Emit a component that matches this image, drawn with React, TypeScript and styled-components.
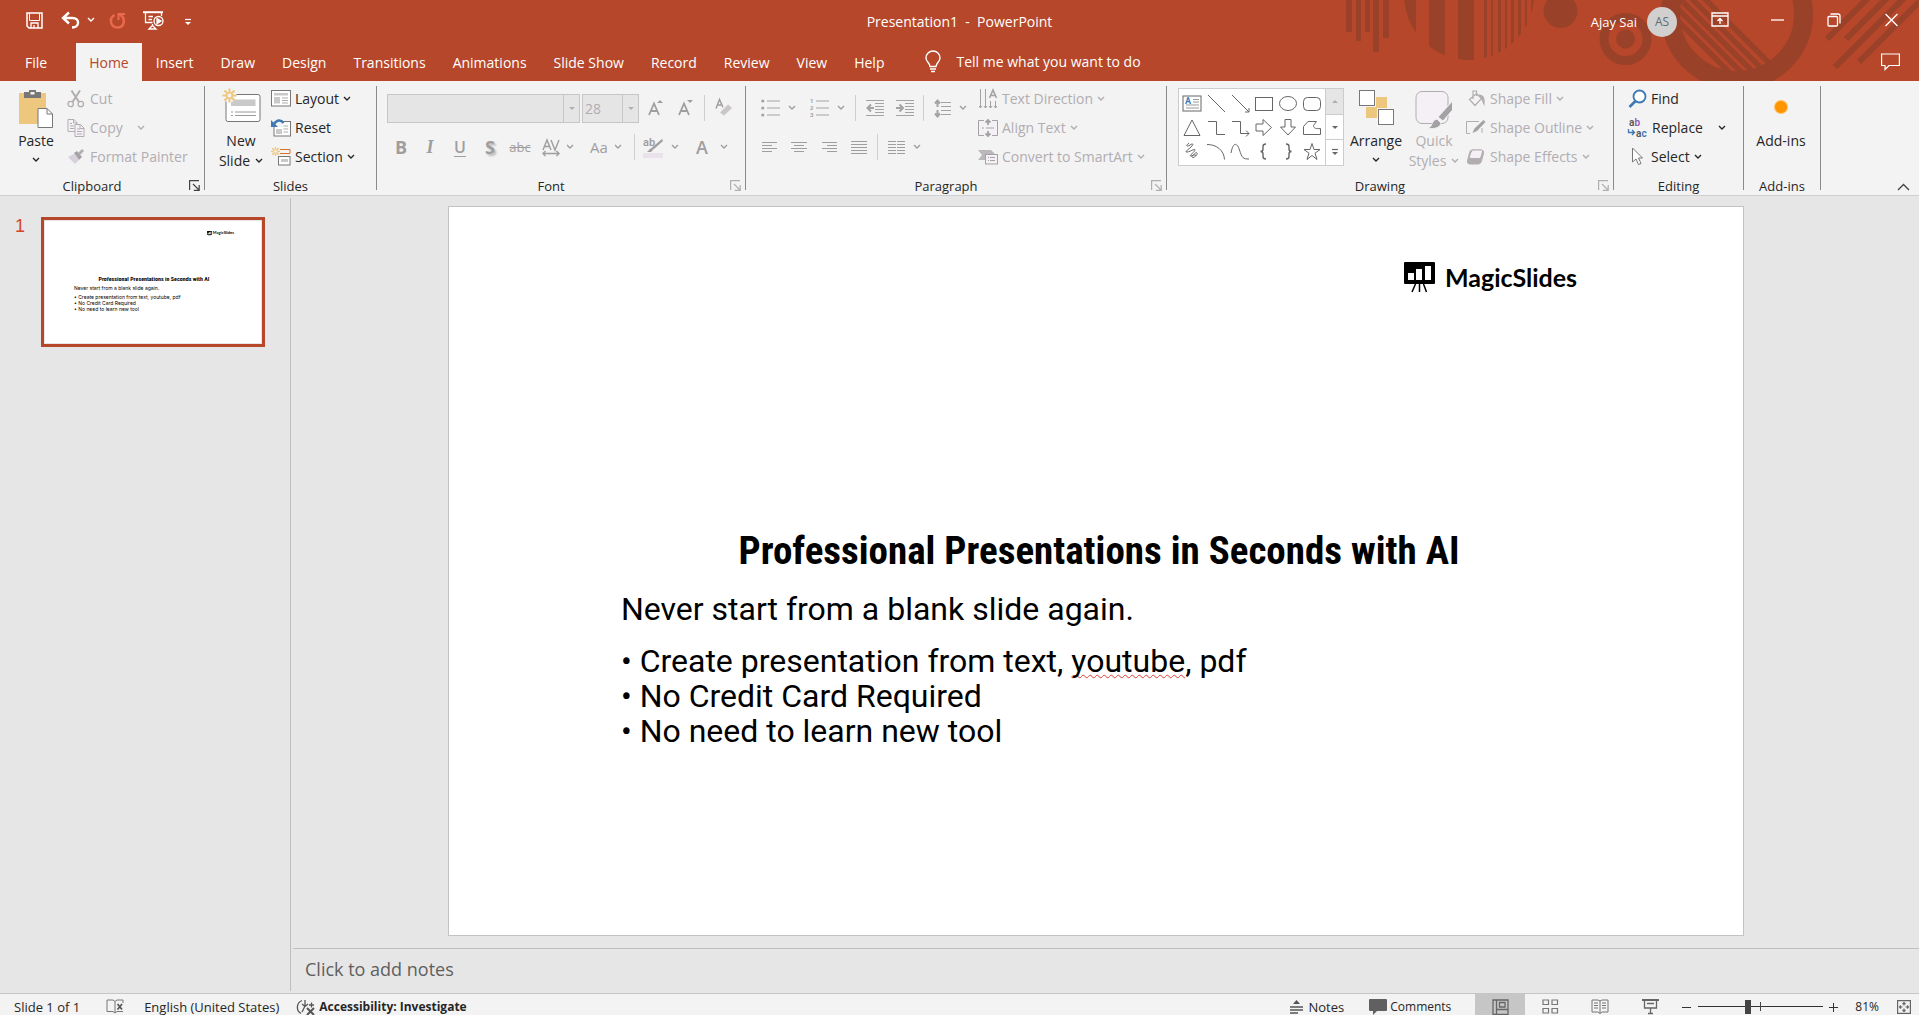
import React from "react";
import styled, { createGlobalStyle, css } from "styled-components";

const GlobalStyle = createGlobalStyle`
  *, *::before, *::after { box-sizing: border-box; }
  body { margin: 0; background: #e6e6e6; }
  button, input, textarea { font: inherit; color: inherit; }
`;

const ACCENT = "#b7472a";
const SHADE = "#9a4129";
const INK = "#262626";
const MUTED = "#b1adb1";
const GOLD = "#eec77f";
const BLUE = "#3f78b5";

/* ---------- shell ---------- */

const Shell = styled.div`
  display: flex;
  flex-direction: column;
  height: 100vh;
  overflow: hidden;
  font-family: "Open Sans", "Noto Sans", sans-serif;
  font-size: 14px;
  color: ${INK};
  background: #e6e6e6;
`;

const Top = styled.header`
  position: relative;
  flex: none;
  color: #fff;
  background: ${ACCENT};
`;

const Pattern = styled.svg`
  position: absolute;
  top: 0;
  right: 0;
`;

const TitleRow = styled.div`
  position: relative;
  display: grid;
  grid-template-columns: 1fr auto 1fr;
  align-items: center;
  height: 43px;
`;

const QuickAccess = styled.div`
  display: flex;
  align-items: center;
  padding-left: 26px;
  padding-bottom: 3px;
`;

const BareButton = styled.button<{ $ml?: number; $pt?: number }>`
  display: flex;
  align-items: center;
  justify-content: center;
  padding: ${(p) => p.$pt ?? 0}px 0 0;
  margin: 0 0 0 ${(p) => p.$ml ?? 0}px;
  border: 0;
  background: none;
`;

const WindowTitle = styled.h1`
  margin: 0;
  font-size: 14px;
  font-weight: 400;
  white-space: pre;
`;

const WindowTools = styled.div`
  display: flex;
  justify-content: flex-end;
  align-items: center;
  padding-right: 20px;
`;

const UserName = styled.span`
  font-size: 13px;
`;

const Avatar = styled.span`
  display: grid;
  place-items: center;
  width: 30px;
  height: 30px;
  margin-left: 10px;
  border-radius: 50%;
  font-size: 12px;
  color: #5d6a78;
  background: #d2d0ce;
`;

const WindowButtons = styled.div`
  display: flex;
  align-items: center;
  margin-left: 34px;
  padding-bottom: 4px;
`;

const TabRow = styled.nav`
  position: relative;
  display: flex;
  align-items: stretch;
  gap: 1px;
  height: 38px;
  padding: 0 19px 0 12px;
`;

const Tab = styled.button<{ $active?: boolean; $file?: boolean }>`
  padding: 0 13px;
  margin-right: ${(p) => (p.$file ? 15 : 0)}px;
  border: 0;
  color: ${(p) => (p.$active ? ACCENT : "#fff")};
  background: ${(p) => (p.$active ? "#f3f3f3" : "transparent")};
`;

const TellMe = styled.label`
  display: flex;
  align-items: center;
  flex: 1;
  gap: 15px;
  margin-left: 27px;
`;

const TellInput = styled.input`
  width: 260px;
  padding: 0 0 2px;
  border: 0;
  outline: 0;
  background: none;
  &::placeholder { color: #fff; opacity: 1; }
`;

/* ---------- ribbon ---------- */

const Ribbon = styled.section`
  display: flex;
  flex: none;
  height: 115px;
  padding-top: 4px;
  border-bottom: 1px solid #d0d0d0;
  background: #f3f3f3;
`;

const GroupBox = styled.section<{ $w: number }>`
  display: flex;
  flex-direction: column;
  flex: none;
  width: ${(p) => p.$w}px;
`;

const Divider = styled.div`
  flex: none;
  width: 1px;
  height: 104px;
  margin-top: 1px;
  background: #8a8a8a;
`;

const GroupBody = styled.div<{ $pl?: number }>`
  display: flex;
  height: 91px;
  padding-left: ${(p) => p.$pl ?? 0}px;
`;

const GroupFoot = styled.footer`
  display: flex;
  align-items: center;
  height: 19px;
  font-size: 13px;
`;

const GroupLabel = styled.span`
  flex: 1;
  text-align: center;
`;

const Launcher = styled.button`
  display: flex;
  width: 20px;
  padding: 0 0 1px 5px;
  border: 0;
  background: none;
`;

const SmallStack = styled.div<{ $ml?: number }>`
  display: flex;
  flex-direction: column;
  align-items: flex-start;
  margin-left: ${(p) => p.$ml ?? 0}px;
`;

const SmallButton = styled.button<{ $gap?: number }>`
  display: flex;
  align-items: center;
  gap: ${(p) => p.$gap ?? 4}px;
  height: 29px;
  padding: 0 0 2px;
  border: 0;
  white-space: nowrap;
  background: none;
  &:disabled { color: ${MUTED}; }
`;

const LargeButton = styled.button<{ $w: number }>`
  display: flex;
  flex-direction: column;
  align-items: center;
  justify-content: flex-start;
  gap: 3px;
  width: ${(p) => p.$w}px;
  padding: 3px 0 0;
  border: 0;
  line-height: 20px;
  background: none;
  &:disabled { color: ${MUTED}; }
`;

const LargeIcon = styled.span`
  display: flex;
  align-items: flex-start;
  height: 40px;
`;

const LargeText = styled.span`
  display: flex;
  flex-direction: column;
  align-items: center;
`;

const Inline = styled.span<{ $ml?: number }>`
  display: flex;
  align-items: center;
  justify-content: center;
  gap: 5px;
  min-height: 18px;
  margin-left: ${(p) => p.$ml ?? 0}px;
`;

const ToolColumn = styled.div<{ $w?: number }>`
  display: flex;
  flex-direction: column;
  gap: 11px;
  padding-top: 8px;
  width: ${(p) => (p.$w ? p.$w + "px" : "auto")};
`;

const ToolRow = styled.div<{ $h: number }>`
  display: flex;
  align-items: center;
  height: ${(p) => p.$h}px;
`;

const Tool = styled.button<{ $w?: number; $gap?: number }>`
  display: flex;
  align-items: center;
  justify-content: center;
  gap: ${(p) => p.$gap ?? 8}px;
  flex: none;
  width: ${(p) => p.$w ?? 30}px;
  height: 26px;
  padding: 0;
  border: 0;
  color: #a09da0;
  background: none;
`;

const Rule = styled.span`
  flex: none;
  width: 1px;
  height: 26px;
  margin: 0 4px 0 3px;
  background: #cfcfcf;
`;

const Glyph = styled.span<{ $kind?: "bold" | "italic" | "under" | "shadow" | "strike" | "case" }>`
  font-size: 18px;
  line-height: 20px;
  font-weight: 600;
  ${(p) => p.$kind === "bold" && css`font-weight: 700;`}
  ${(p) => p.$kind === "italic" && css`font-family: "Liberation Serif", serif; font-style: italic; font-weight: 700;`}
  ${(p) => p.$kind === "under" && css`font-size: 16px; text-decoration: underline; text-underline-offset: 3px;`}
  ${(p) => p.$kind === "shadow" && css`font-weight: 700; text-shadow: 2px 2px 2px #bbb;`}
  ${(p) => p.$kind === "strike" && css`font-size: 13px; font-weight: 400; text-decoration: line-through;`}
  ${(p) => p.$kind === "case" && css`font-size: 15px; font-weight: 400;`}
`;

const Combo = styled.label<{ $w: number }>`
  display: flex;
  width: ${(p) => p.$w}px;
  height: 29px;
  margin-right: 2px;
  border: 1px solid #c6c6c6;
  color: ${MUTED};
  background: #e5e5e5;
`;

const ComboInput = styled.input`
  flex: 1;
  min-width: 0;
  padding: 0 2px;
  border: 0;
  outline: 0;
  background: none;
`;

const ComboArrow = styled.span`
  display: grid;
  place-items: center;
  width: 16px;
  border-left: 1px solid #c6c6c6;
`;

const Gallery = styled.div`
  display: flex;
  height: 78px;
  margin: 3px 4px 0 0;
  border: 1px solid #cccccc;
  background: #fff;
`;

const ShapeGrid = styled.div`
  display: grid;
  grid-template-columns: repeat(6, 24px);
  grid-auto-rows: 24px;
  padding: 2px 1px 0 1px;
`;

const ShapeButton = styled(BareButton)`
  width: 24px;
  height: 24px;
`;

const GalleryScroll = styled.div`
  display: flex;
  flex-direction: column;
  width: 18px;
  border-left: 1px solid #cccccc;
`;

const ScrollButton = styled.button`
  display: grid;
  place-items: center;
  flex: 1;
  padding: 0;
  border: 0;
  background: #fff;
  &:disabled { background: #e5e5e5; }
  & + & { border-top: 1px solid #cccccc; }
`;

const Collapse = styled(BareButton)`
  align-self: flex-end;
  margin: 0 9px 4px auto;
`;

/* ---------- workspace ---------- */

const Workspace = styled.main`
  display: flex;
  flex: 1;
  min-height: 0;
`;

const ThumbPane = styled.aside`
  display: flex;
  align-items: flex-start;
  flex: none;
  width: 291px;
  margin: 2px 2px 2px 0;
  padding: 19px 0 0 15px;
  border-right: 1px solid #bfbfbf;
`;

const ThumbNumber = styled.span`
  width: 26px;
  font-family: "Liberation Sans", sans-serif;
  font-size: 18px;
  line-height: 18px;
  color: #d24726;
`;

const ThumbFrame = styled.button`
  width: 224px;
  height: 130px;
  padding: 1px;
  border: 3px solid ${ACCENT};
  text-align: left;
  background: #e6e6e6;
`;

const Stage = styled.div`
  display: flex;
  flex-direction: column;
  flex: 1;
  min-width: 0;
`;

const Canvas = styled.div`
  display: flex;
  justify-content: center;
  flex: 1;
  min-height: 0;
  padding: 11px 20px 13px 0;
`;

const SlideFrame = styled.div`
  height: 100%;
  aspect-ratio: 16 / 9;
  background: #fff;
  box-shadow: 0 0 0 1px #c3c3c3;
`;

const Page = styled.article<{ $mini?: boolean }>`
  display: flex;
  flex-direction: column;
  height: 100%;
  padding: ${(p) => (p.$mini ? "9px 27px 0 29px" : "55px 166px 0 172px")};
  font-family: ${(p) => (p.$mini ? "Inter" : "Roboto")}, sans-serif;
  font-size: ${(p) => (p.$mini ? 5 : 32)}px;
  line-height: ${(p) => (p.$mini ? 6 : 35)}px;
  color: #000;
  background: #fff;
`;

const Brand = styled.div<{ $mini?: boolean }>`
  display: flex;
  align-items: center;
  align-self: flex-end;
  gap: ${(p) => (p.$mini ? 1 : 10)}px;
  height: ${(p) => (p.$mini ? 6 : 30)}px;
  font-family: Lato, sans-serif;
  font-size: ${(p) => (p.$mini ? 4 : 25)}px;
  font-weight: 700;
`;

const Headline = styled.h2<{ $mini?: boolean }>`
  align-self: center;
  margin: ${(p) => (p.$mini ? "39px 0 0" : "230px 0 0")};
  font-family: "Roboto Condensed", "Liberation Sans Narrow", "DejaVu Sans Condensed", sans-serif;
  font-size: ${(p) => (p.$mini ? 6 : 39)}px;
  line-height: ${(p) => (p.$mini ? 8 : 58)}px;
  font-weight: 700;
  white-space: nowrap;
`;

const Lead = styled.p<{ $mini?: boolean }>`
  margin: ${(p) => (p.$mini ? "2px 0 3px" : "12px 0 17px")};
  white-space: nowrap;
`;

const Points = styled.ul`
  margin: 0;
  padding: 0;
  list-style: none;
  white-space: nowrap;
`;

const Misspelt = styled.span`
  text-decoration: underline wavy #e03c31 1px;
  text-underline-offset: 2px;
  text-decoration-skip-ink: none;
`;

const Notes = styled.textarea`
  flex: none;
  height: 45px;
  padding: 8px 12px;
  border: 0;
  border-top: 1px solid #bfbfbf;
  outline: 0;
  resize: none;
  font-size: 18px;
  line-height: 24px;
  background: transparent;
  &::placeholder { color: #5f5f5f; opacity: 1; }
`;

/* ---------- status bar ---------- */

const Status = styled.footer`
  display: flex;
  flex: none;
  height: 22px;
  padding: 0 8px 0 14px;
  border-top: 1px solid #c6c6c6;
  font-size: 12px;
  background: #f3f3f3;
`;

const StatusItem = styled.button<{ $ml?: number; $w?: number; $on?: boolean; $strong?: boolean; $gap?: number; $big?: boolean }>`
  display: flex;
  align-items: center;
  justify-content: center;
  gap: ${(p) => p.$gap ?? 5}px;
  width: ${(p) => (p.$w ? p.$w + "px" : "auto")};
  margin-left: ${(p) => p.$ml ?? 0}px;
  padding: 4px 0 0;
  border: 0;
  font-size: ${(p) => (p.$big ? 13 : 12)}px;
  line-height: 16px;
  font-weight: ${(p) => (p.$strong ? 700 : 400)};
  white-space: nowrap;
  background: ${(p) => (p.$on ? "#c6c6c6" : "transparent")};
`;

const Spring = styled.span`
  flex: 1;
`;

const ZoomSlider = styled.input`
  appearance: none;
  width: 125px;
  height: 17px;
  margin: 4px 6px 0;
  background:
    linear-gradient(#444, #444) 62px 4px / 1px 9px no-repeat,
    linear-gradient(#333, #333) 0 8px / 100% 1px no-repeat;
  &::-webkit-slider-thumb {
    appearance: none;
    width: 6px;
    height: 14px;
    background: #444;
  }
`;

/* ---------- icons ---------- */

type IconProps = { w: number; h: number; children: React.ReactNode; c?: string; sw?: number; vb?: string };

const Svg = styled.svg`
  flex: none;
  overflow: visible;
  font-family: Roboto, sans-serif;
`;

const Icon = ({ w, h, children, c = "currentColor", sw = 1, vb }: IconProps) => (
  <Svg width={w} height={h} viewBox={vb ?? `0 0 ${w} ${h}`} fill="none" stroke={c} strokeWidth={sw} aria-hidden="true">
    {children}
  </Svg>
);

const Chevron = ({ c = "currentColor" }: { c?: string }) => (
  <Icon w={8} h={6} c={c} sw={1.4}><path d="M1 1l3 3 3-3" /></Icon>
);

const Caret = ({ c = MUTED, up, bar }: { c?: string; up?: boolean; bar?: boolean }) => (
  <Icon w={8} h={8} c="none">
    {bar && <path d="M1 .5h6" stroke={c} strokeWidth="1.2" />}
    <path d={up ? "M1 6l3-3 3 3z" : "M1 3h6L4 6z"} fill={c} />
  </Icon>
);

const LauncherIcon = ({ c }: { c: string }) => (
  <Icon w={11} h={11} c={c} sw={1.2}><path d="M.6 10V.6H10M4 4l5.5 5.5M10.2 5v5.4H4.8" /></Icon>
);

const SaveIcon = () => (
  <Icon w={17} h={17} c="#fff" sw={1.5}><path d="M1 1h15v15H3L1 14z" /><path d="M3.500 1v7.500h10V1" strokeWidth="1" /><path d="M5 16v-5h7v5M8 16v-3" strokeWidth="1.3" /></Icon>
);
const UndoIcon = () => (
  <Icon w={19} h={17} c="#fff" sw={2.4}><path d="M8 .5L2 6l6 5.500M3 6h8.500c7.500 0 7.500 9.500-.500 9.500" /></Icon>
);
const RedoIcon = () => (
  <Icon w={17} h={17} c="#e9694c" sw={2.6}><path d="M5.500 3C-1 7 2 15.500 8.500 15.500S17.500 7 11 2.500" /><path d="M9.500 8V2H16" strokeWidth="2" /></Icon>
);
const ShowIcon = () => (
  <Icon w={21} h={19} c="#fff" sw={1.3}>
    <path d="M0 1.200h20" strokeWidth="2" /><path d="M2.500 2v9.500h7M18.500 2v3M5.500 5.500H10M5.500 8.500H9M9.500 13v1.500M6 18l3.500-3.500 3.500 3.500z" />
    <circle cx="15.500" cy="10" r="4.500" /><path d="M14 7.500l4 2.500-4 2.500z" fill="#fff" />
  </Icon>
);
const BulbIcon = () => (
  <Icon w={16} h={22} c="#fff" sw={1.4}><path d="M5 15.500c0-3.500-4-4.500-4-8.500a7 7 0 0114 0c0 4-4 5-4 8.500zM5 18h6M6 20.500h4" /></Icon>
);
const CommentOutline = () => (
  <Icon w={19} h={18} c="#fff" sw={1.2}><path d="M.6 1h17.800v11.500H8l-4 4v-4H.6z" /></Icon>
);

const PasteIcon = () => (
  <Icon w={36} h={40} c="none">
    <rect x="1" y="5" width="27" height="31" fill={GOLD} />
    <path d="M6 4h5V2h7v2h5v6H6z" fill="#777" /><path d="M12.500 4h4v2.500h-4z" fill="#f3f3f3" />
    <path d="M20 20.500h9l5.500 5.500v13.500H20z" fill="#fff" stroke="#777" /><path d="M29 20.500V26h5.500" stroke="#777" />
  </Icon>
);
const CutIcon = () => (
  <Icon w={18} h={18} c={MUTED} sw={1.3}>
    <path d="M4.500 .5l7.500 11.500M13 .5L5.500 12" strokeWidth="2" /><circle cx="3.700" cy="14" r="2.700" /><circle cx="13.800" cy="14" r="2.700" />
  </Icon>
);
const CopyIcon = () => (
  <Icon w={18} h={18} c={MUTED}>
    <path d="M8 12.500H1V.5h6l3 3v2M6.500.5v3.500H10M3 4.500h2M3 7h4M3 9.500h4" /><path d="M8 5.500h5.500l3.500 3.500v8.500H8zM13 5.500V9.500h4M10 10h3M10 12.500h5M10 15h5" fill="#f5f0f6" />
  </Icon>
);
const PainterIcon = () => (
  <Icon w={18} h={18} c="none">
    <path d="M1 9l6-3 5 6-4 4z" fill="#d8d0da" /><path d="M7 5l3-2 5 6-3 3z" fill="#a5a2a5" /><path d="M11 5l4-4 2 2-4 4z" fill={MUTED} />
  </Icon>
);
const Burst = ({ x, y, r }: { x: number; y: number; r: number }) => (
  <g stroke={GOLD} strokeWidth={r > 5 ? 2 : 1.4}>
    {[0, 45, 90, 135, 180, 225, 270, 315].map((a) => (
      <path key={a} d={`M${x} ${y - r * 0.45}V${y - r}`} transform={`rotate(${a} ${x} ${y})`} />
    ))}
    <circle cx={x} cy={y} r={r * 0.4} fill="#f3f3f3" strokeWidth={r > 5 ? 1.6 : 1} />
  </g>
);
const NewSlideIcon = () => (
  <Icon w={40} h={40} c="#777">
    <rect x="5" y="6.500" width="34" height="27" rx="2" fill="#fff" /><path d="M10 11.500h24.500v6.500H10z" fill="#c9c9c9" stroke="none" />
    <path d="M10 24h2M14 24h21M10 27.500h2M14 27.500h21" stroke="#999" /><circle cx="8.500" cy="7.500" r="7" fill="#f3f3f3" stroke="none" /><Burst x={8.5} y={7.5} r={7} />
  </Icon>
);
const LayoutIcon = () => (
  <Icon w={20} h={17} c="#777"><rect x=".5" y=".5" width="19" height="15.500" fill="#fff" /><path d="M3 3h14v2.500H3zM3 7h6v6.500H3z" fill="#c9c9c9" stroke="none" /><path d="M11 8h6M11 10.500h6M11 13h6" stroke="#aaa" /></Icon>
);
const ResetIcon = () => (
  <Icon w={20} h={18} c="#777"><rect x="3" y="2.500" width="16.500" height="14.500" fill="#fff" /><path d="M5 10h6v5H5z" fill="#c9c9c9" stroke="none" /><path d="M12.500 7H17M12.500 10H17M12.500 13H17" stroke="#aaa" /><path d="M0 0h12v8H0z" fill="#f3f3f3" stroke="none" /><path d="M3 5C6 .5 10 .5 12.500 4" stroke={BLUE} strokeWidth="2.400" /><path d="M0 1v7h7z" fill={BLUE} stroke="none" /></Icon>
);
const SectionIcon = () => (
  <Icon w={20} h={19} c="#777"><path d="M9 2.500h10v4H9" stroke="#d9702c" /><rect x="7.500" y="9.500" width="11.500" height="8.500" fill="#fff" /><path d="M10 12h7v3h-7z" fill="#c9c9c9" stroke="none" /><Burst x={4.5} y={4.5} r={4.5} /></Icon>
);
const GrowIcon = ({ down }: { down?: boolean }) => (
  <Icon w={16} h={20} c="#a09da0" sw={1.8}><path d="M1 17L6 5.500 11 17M3 13h6" /><path d={down ? "M9 2h6l-3 3z" : "M9 5h6l-3-3z"} fill="#a09da0" stroke="none" /></Icon>
);
const EraseIcon = () => (
  <Icon w={18} h={20} c="#a09da0" sw={1.5}><path d="M1 10.500l3.500-9L8 9.500M2.500 7h5" /><path d="M4 14.500L13 5.500l5 4.500-9 8.500z" fill="#c9c5c9" stroke="#f3f3f3" /></Icon>
);
const SpacingIcon = () => (
  <Icon w={18} h={19} c="#a09da0" sw={1.4}><path d="M1 12L5 2l4 10M2.500 8.500h5M9 2l4 10L17 2M1 15.500h16M3.500 13L1 15.500 3.500 18M14.500 13l2.500 2.500-2.500 2.500" /></Icon>
);
const HighlightIcon = () => (
  <Icon w={20} h={21} c="none"><path d="M0 16h20v5H0z" fill="#e9e2ea" /><path d="M19 2l-10 8.500-1.500 3 3.500-1.500L20 4z" fill="#a09da0" /><path d="M4 15l4-4 2 2-2 2z" fill="#a09da0" />
    <text x="0" y="9" fontSize="11" fontWeight="600" fill="#a09da0">ab</text></Icon>
);
const ListIcon = ({ num }: { num?: boolean }) => (
  <Icon w={19} h={18} c="#a5a2a5"><path d="M6 2h13M6 9h13M6 16h13" />
    {num ? <g fill="#a5a2a5" stroke="none" fontSize="6" fontWeight="700"><text x="0" y="4">1</text><text x="0" y="11">2</text><text x="0" y="18">3</text></g>
      : <g fill="#a5a2a5" stroke="none"><circle cx="1.800" cy="2" r="1.600" /><circle cx="1.800" cy="9" r="1.600" /><circle cx="1.800" cy="16" r="1.600" /></g>}
  </Icon>
);
const IndentIcon = ({ out }: { out?: boolean }) => (
  <Icon w={19} h={17} c="#a5a2a5"><path d="M0 .5h18M9 3.500h9M9 6.500h9M9 9.500h9M9 12.500h9M0 15.500h18" /><path d={out ? "M8 8H2M5 4.500L1.500 8 5 11.500" : "M0 8h6M3.500 4.500L7 8l-3.500 3.500"} strokeWidth="2" /></Icon>
);
const LineSpaceIcon = () => (
  <Icon w={18} h={19} c="#a5a2a5"><path d="M7 3.500h10M7 7.500h10M7 11.500h10M7 15.500h10" /><path d="M3.500 1.500V8M1 4.500l2.500-3 2.500 3M3.500 11v6M1 14.500l2.500 3 2.500-3" strokeWidth="2" /></Icon>
);
const AlignIcon = ({ kind }: { kind: "l" | "c" | "r" | "j" | "cols" }) => {
  const d = {
    l: "M0 1.500h15M0 4.500h10M0 7.500h15M0 10.500h10",
    c: "M0 1.500h16M3 4.500h10M0 7.500h16M3 10.500h10",
    r: "M0 1.500h15M5 4.500h10M0 7.500h15M5 10.500h10",
    j: "M0 .5h16M0 3.500h16M0 6.500h16M0 9.500h16M0 12.500h16",
    cols: "M0 .5h8M9 .5h8M0 3.500h8M9 3.500h8M0 6.500h8M9 6.500h8M0 9.500h8M9 9.500h8M0 12.500h8M9 12.500h8",
  }[kind];
  const w = kind === "cols" ? 17 : kind === "j" || kind === "c" ? 16 : 15;
  return <Icon w={w} h={13} c="#a09da0"><path d={d} /></Icon>;
};
const DirectionIcon = () => (
  <Icon w={20} h={20} c="#a5a2a5"><path d="M2.500 0v19M7.500 0v19M12.500 12v7M17.500 12v7M1 17l1.500 2L4 17M6 17l1.500 2L9 17M11 17l1.500 2 1.500-2M16 17l1.500 2 1.500-2" /><path d="M11.500 9L15 1l3.500 8M12.500 6.500h5" strokeWidth="1.600" /></Icon>
);
const AlignTextIcon = () => (
  <Icon w={20} h={18} c="#a5a2a5"><path d="M6 1.500H.5v15H6M14 1.500h5.500v15H14" fill="#f5f0f6" /><path d="M4 9h2M8 9h8" /><path d="M10 1v5M7.500 3.500L10 1l2.500 2.500M10 12v5M7.500 14.500L10 17l2.500-2.500" strokeWidth="1.800" /></Icon>
);
const SmartArtIcon = () => (
  <Icon w={20} h={16} c="#a5a2a5"><path d="M0 1h13l4 4H7v6H0l4-5z" fill="#bbb7bb" stroke="none" /><rect x="7.500" y="5.500" width="12" height="9.500" fill="#f5f0f6" /><path d="M10 8.500h1M12 8.500h5M10 11.500h1M12 11.500h5" /></Icon>
);
const ArrangeIcon = () => (
  <Icon w={36} h={40} c="#777"><path d="M18 9h11v11H18zM8 19h11v11H8z" fill={GOLD} stroke="none" /><rect x="1.500" y="2.500" width="15" height="15" fill="#fff" /><rect x="20.500" y="21.500" width="15" height="15" fill="#fff" /></Icon>
);
const StylesIcon = () => (
  <Icon w={38} h={40} c={MUTED}><rect x="1" y="3.500" width="32" height="32" rx="6" fill="#f5f0f6" /><path d="M13 40c5-1 3-8 9-9l4 4c0 4-7 7-13 5z" fill="#a5a2a5" stroke="#f3f3f3" /><path d="M23 29L37.500 13v9L28 33z" fill="#a5a2a5" stroke="#f3f3f3" /></Icon>
);
const FillIcon = () => (
  <Icon w={20} h={18} c={MUTED} sw={1.2}><path d="M3.500 9.500l7-6 5 5-6.500 7zM7 9V1h3.500v5" /><path d="M13.500 5c3.500 0 5 3 4.500 9-1-2-1.500-5-4.500-9z" fill={MUTED} /></Icon>
);
const OutlineIcon = () => (
  <Icon w={20} h={18} c={MUTED}><path d="M13 2.500H.5v12H4M16 9v5" /><path d="M17.500 1l-9 8.500-2 4.500 4.500-2 8.500-9z" fill="#a5a2a5" stroke="none" /></Icon>
);
const EffectsIcon = () => (
  <Icon w={20} h={18} c={MUTED}><path d="M6 2h9q3 0 2.500 3l-2 8q-1 3-3 3H4q-3 0-2.500-3l2-8q.5-3 2.500-3z" fill={MUTED} /><path d="M7 2h8.500q1.500 0 1 2l-1.500 5q-.5 1.500-2 1.500H5q-2 0-1.500-2L5 4q.5-2 2-2z" fill="#f5f0f6" /></Icon>
);
const FindIcon = () => (
  <Icon w={19} h={19} c={BLUE} sw={1.8}><circle cx="11.500" cy="7.500" r="6" fill="#fff" /><path d="M7.500 12L1.500 18" strokeWidth="2.600" /></Icon>
);
const ReplaceIcon = () => (
  <Icon w={20} h={20} c="none"><g fontSize="10" fontWeight="600"><text x="1" y="8" fill="#555">a<tspan fill="#8f5bb5">b</tspan></text><text x="8" y="19" fill="#555">a<tspan fill={BLUE}>c</tspan></text></g><path d="M.5 11v3.500H6M4 12l2.500 2.500L4 17" stroke={BLUE} strokeWidth="1.300" /></Icon>
);
const SelectIcon = () => (
  <Icon w={19} h={19} c="#777"><path d="M4.500 1v14l3.500-3 2.500 5.500 2.500-1-2.500-5.500h4z" fill="#fff" /></Icon>
);

const SHAPES = [
  <><rect x="1" y="3" width="18" height="15" /><path d="M11 6.500h6M11 9h6M4 12h13M4 15h13" stroke="#999" /><text x="3" y="11" fontSize="9" fontWeight="700" fill={BLUE} stroke="none">A</text></>,
  <path d="M2 2l17 17" />,
  <path d="M2 2l17 17M19 15v4h-4" />,
  <rect x="1.500" y="4.500" width="17" height="13" />,
  <ellipse cx="10" cy="10.500" rx="8.500" ry="7" />,
  <rect x="1.500" y="4.500" width="17" height="13" rx="4" />,
  <path d="M10 3l8 15.500H2z" />,
  <path d="M2 4.500h8.500v13H19" />,
  <path d="M2 4.500h8.500v12H19M16 13.500l3 3-3 3" />,
  <path d="M2 7h7V2.500l8.500 8-8.500 8V14H2z" />,
  <path d="M7 2.500h6V10h4.500L10 18 2.500 10H7z" />,
  <path d="M1.500 17.500V9.500L6 4.500h8.500l-3 4c0 3 3 3.500 7 3v6z" />,
  <path d="M7 2C3 5 5 6 8 4s4-1 1 2-7 5-4 5 8-4 8-2-7 6-4 6 5-5 6-3-4 6-5 4 4-3 4-1" />,
  <path d="M1 3.500c10 0 17 6 17.500 15" />,
  <path d="M1 12C3 1 7 1 9.500 9S13 18 19 18" />,
  <path d="M12 3Q9 3 9 5.500V8q0 2.500-2.500 2.500Q9 10.500 9 13v2.500Q9 18 12 18" strokeWidth="1.400" />,
  <path d="M8 3q3 0 3 2.500V8q0 2.500 2.500 2.500Q11 10.500 11 13v2.500Q11 18 8 18" strokeWidth="1.400" />,
  <path d="M10 2.500l2 6h6l-5 3.700 2 6.300-5-4-5 4 2-6.300-5-3.700h6z" />,
];

const SHAPE_NAMES = ["Text box", "Line", "Arrow", "Rectangle", "Oval", "Rounded rectangle", "Triangle", "Elbow", "Elbow arrow", "Right arrow", "Down arrow", "Freeform", "Scribble", "Arc", "Curve", "Left brace", "Right brace", "Star"];

const STRIPES: [number, number][] = [[124, 12], [149, 16], [178, 16], [204, 3], [211, 2], [218, 3], [225, 2], [231, 3], [238, 3], [245, 2], [251, 3]];

const HeaderPattern = () => (
  <Pattern width="639" height="81" viewBox="0 0 639 81" fill={SHADE} aria-hidden="true">
    <clipPath id="disc"><circle cx="189" cy="-5" r="65" /></clipPath>
    <clipPath id="hole"><circle cx="457" cy="14" r="58" /></clipPath>
    <path d="M66 0h6v32h-6zM76 0h5v41h-5zM85 0h5v32h-5zM93 0h6v52h-6zM103 0h6v38h-6z" />
    <g clipPath="url(#disc)">{STRIPES.map(([x, w]) => <rect key={x} x={x} y="0" width={w} height="81" />)}</g>
    <circle cx="280.500" cy="11" r="17" />
    <circle cx="345.500" cy="39" r="21.500" fill="none" stroke={SHADE} strokeWidth="9" />
    <circle cx="345.500" cy="39" r="9.500" />
    <circle cx="457" cy="14" r="66.500" fill="none" stroke={SHADE} strokeWidth="19" />
    <g clipPath="url(#hole)" stroke={SHADE} strokeWidth="5.500">
      <path d="M416-10l90 90M402-11l90 90M389-12l90 90M376-13l90 90M363-14l90 90" />
    </g>
    <path d="M395 35l34 32c-18-4-30-16-34-32z" />
    <g stroke={SHADE} strokeWidth="6"><path d="M547 39L590-4M566 39L609-4M555 67L626-4M579 62L645-4" /></g>
  </Pattern>
);

const BrandMark = ({ mini }: { mini?: boolean }) => (
  <Icon w={mini ? 5 : 31} h={mini ? 5 : 30} vb="0 0 31 30" c="none">
    <rect y="0" width="31" height="22" rx="1" fill="#000" />
    <path d="M4 11h6v7H4zM12 7h6v11h-6zM21 4h6v14h-6z" fill="#fff" />
    <path d="M11.500 22L8 30M15.500 22v8M19.500 22l3 8" stroke="#000" strokeWidth="1.500" />
  </Icon>
);

/* ---------- composition ---------- */

const SlidePage = ({ mini }: { mini?: boolean }) => (
  <Page as={mini ? "span" : "article"} $mini={mini}>
    <Brand as={mini ? "span" : "div"} $mini={mini}><BrandMark mini={mini} />MagicSlides</Brand>
    <Headline as={mini ? "span" : "h2"} $mini={mini}>Professional Presentations in Seconds with AI</Headline>
    <Lead as={mini ? "span" : "p"} $mini={mini}>Never start from a blank slide again.</Lead>
    <Points as={mini ? "span" : "ul"}>
      {mini ? (
        <>• Create presentation from text, youtube, pdf<br />• No Credit Card Required<br />• No need to learn new tool</>
      ) : (
        <>
          <li>• Create presentation from text, <Misspelt>youtube</Misspelt>, pdf</li>
          <li>• No Credit Card Required</li>
          <li>• No need to learn new tool</li>
        </>
      )}
    </Points>
  </Page>
);

const Group = ({ w, label, launch, pl, children }: { w: number; label: string; launch?: string; pl?: number; children: React.ReactNode }) => (
  <>
    <GroupBox $w={w} aria-label={label}>
      <GroupBody $pl={pl}>{children}</GroupBody>
      <GroupFoot>
        <GroupLabel>{label}</GroupLabel>
        {launch && <Launcher aria-label={label + " settings"}><LauncherIcon c={launch} /></Launcher>}
      </GroupFoot>
    </GroupBox>
    <Divider />
  </>
);

const TABS = ["Home", "Insert", "Draw", "Design", "Transitions", "Animations", "Slide Show", "Record", "Review", "View", "Help"];

export default function App() {
  return (
    <Shell>
      <GlobalStyle />
      <Top>
        <HeaderPattern />
        <TitleRow>
          <QuickAccess>
            <BareButton aria-label="Save"><SaveIcon /></BareButton>
            <BareButton $ml={18} aria-label="Undo"><UndoIcon /></BareButton>
            <BareButton $ml={7} aria-label="Undo history"><Chevron c="#fff" /></BareButton>
            <BareButton $ml={14} aria-label="Redo"><RedoIcon /></BareButton>
            <BareButton $ml={17} aria-label="Start slide show"><ShowIcon /></BareButton>
            <BareButton $ml={20} $pt={6} aria-label="Customize toolbar"><Caret c="#fff" bar /></BareButton>
          </QuickAccess>
          <WindowTitle>{"Presentation1  -  PowerPoint"}</WindowTitle>
          <WindowTools>
            <UserName>Ajay Sai</UserName>
            <Avatar>AS</Avatar>
            <WindowButtons>
              <BareButton aria-label="Ribbon display options"><Icon w={18} h={15} c="#fff" sw={1.3}><path d="M1 1h16v13H1zM1 4h16M9 12V6.500M6.500 9L9 6.500 11.500 9" /></Icon></BareButton>
              <BareButton $ml={42} aria-label="Minimize"><Icon w={13} h={14} c="#fff" sw={1.3}><path d="M0 7h13" /></Icon></BareButton>
              <BareButton $ml={43} aria-label="Restore"><Icon w={15} h={14} c="#fff" sw={1.3}><rect x="1" y="3.500" width="9.500" height="9.500" rx="1" /><path d="M3.500 1H11q2 0 2 2v7.500" /></Icon></BareButton>
              <BareButton $ml={42} aria-label="Close"><Icon w={15} h={14} c="#fff" sw={1.3}><path d="M1.500 1l12 12M13.500 1l-12 12" /></Icon></BareButton>
            </WindowButtons>
          </WindowTools>
        </TitleRow>
        <TabRow>
          <Tab $file>File</Tab>
          {TABS.map((t) => <Tab key={t} $active={t === "Home"}>{t}</Tab>)}
          <TellMe><BulbIcon /><TellInput aria-label="Tell me" placeholder="Tell me what you want to do" /></TellMe>
          <BareButton aria-label="Comments"><CommentOutline /></BareButton>
        </TabRow>
      </Top>

      <Ribbon>
        <Group w={204} label="Clipboard" launch="#444" pl={10}>
          <LargeButton $w={52}><LargeIcon><PasteIcon /></LargeIcon><LargeText>Paste<Inline><Chevron /></Inline></LargeText></LargeButton>
          <SmallStack $ml={5}>
            <SmallButton $gap={5} disabled><CutIcon />Cut</SmallButton>
            <SmallButton $gap={5} disabled><CopyIcon />Copy<Inline $ml={9}><Chevron /></Inline></SmallButton>
            <SmallButton $gap={5} disabled><PainterIcon />Format Painter</SmallButton>
          </SmallStack>
        </Group>
        <Group w={171} label="Slides" pl={11}>
          <LargeButton $w={50}><LargeIcon><NewSlideIcon /></LargeIcon><LargeText>New<Inline>Slide<Chevron /></Inline></LargeText></LargeButton>
          <SmallStack $ml={5}>
            <SmallButton><LayoutIcon />Layout<Chevron /></SmallButton>
            <SmallButton><ResetIcon />Reset</SmallButton>
            <SmallButton><SectionIcon />Section<Chevron /></SmallButton>
          </SmallStack>
        </Group>
        <Group w={368} label="Font" launch={MUTED} pl={10}>
          <ToolColumn>
            <ToolRow $h={30}>
              <Combo $w={193}><ComboInput aria-label="Font name" disabled /><ComboArrow><Caret /></ComboArrow></Combo>
              <Combo $w={57}><ComboInput aria-label="Font size" disabled defaultValue="28" /><ComboArrow><Caret /></ComboArrow></Combo>
              <Tool aria-label="Grow font"><GrowIcon /></Tool>
              <Tool aria-label="Shrink font"><GrowIcon down /></Tool>
              <Rule />
              <Tool aria-label="Clear formatting"><EraseIcon /></Tool>
            </ToolRow>
            <ToolRow $h={26}>
              <Tool $w={28}><Glyph $kind="bold">B</Glyph></Tool>
              <Tool><Glyph $kind="italic">I</Glyph></Tool>
              <Tool><Glyph $kind="under">U</Glyph></Tool>
              <Tool><Glyph $kind="shadow">S</Glyph></Tool>
              <Tool><Glyph $kind="strike">abc</Glyph></Tool>
              <Tool $w={46} $gap={6} aria-label="Character spacing"><SpacingIcon /><Chevron /></Tool>
              <Tool $w={50} $gap={6}><Glyph $kind="case">Aa</Glyph><Chevron /></Tool>
              <Rule />
              <Tool $w={44} aria-label="Highlight"><HighlightIcon /><Chevron /></Tool>
              <Tool $w={58} $gap={12}><Glyph>A</Glyph><Chevron /></Tool>
            </ToolRow>
          </ToolColumn>
        </Group>
        <Group w={420} label="Paragraph" launch={MUTED} pl={8}>
          <ToolColumn $w={224}>
            <ToolRow $h={30}>
              <Tool $w={49} aria-label="Bullets"><ListIcon /><Chevron /></Tool>
              <Tool $w={49} aria-label="Numbering"><ListIcon num /><Chevron /></Tool>
              <Rule />
              <Tool aria-label="Decrease indent"><IndentIcon out /></Tool>
              <Tool aria-label="Increase indent"><IndentIcon /></Tool>
              <Rule />
              <Tool $w={44} $gap={7} aria-label="Line spacing"><LineSpaceIcon /><Chevron /></Tool>
            </ToolRow>
            <ToolRow $h={26}>
              <Tool aria-label="Align left"><AlignIcon kind="l" /></Tool>
              <Tool aria-label="Center"><AlignIcon kind="c" /></Tool>
              <Tool aria-label="Align right"><AlignIcon kind="r" /></Tool>
              <Tool aria-label="Justify"><AlignIcon kind="j" /></Tool>
              <Rule />
              <Tool $w={44} aria-label="Columns"><AlignIcon kind="cols" /><Chevron /></Tool>
            </ToolRow>
          </ToolColumn>
          <SmallStack>
            <SmallButton disabled><DirectionIcon />Text Direction<Chevron /></SmallButton>
            <SmallButton disabled><AlignTextIcon />Align Text<Chevron /></SmallButton>
            <SmallButton disabled><SmartArtIcon />Convert to SmartArt<Chevron /></SmallButton>
          </SmallStack>
        </Group>
        <Group w={446} label="Drawing" launch={MUTED} pl={11}>
          <Gallery>
            <ShapeGrid>
              {SHAPES.map((s, i) => (
                <ShapeButton key={i} aria-label={SHAPE_NAMES[i]}><Icon w={20} h={20} c="#666">{s}</Icon></ShapeButton>
              ))}
            </ShapeGrid>
            <GalleryScroll>
              <ScrollButton disabled aria-label="Previous row"><Caret up /></ScrollButton>
              <ScrollButton aria-label="Next row"><Caret c="#666" /></ScrollButton>
              <ScrollButton aria-label="More shapes"><Caret c="#666" bar /></ScrollButton>
            </GalleryScroll>
          </Gallery>
          <LargeButton $w={56}><LargeIcon><ArrangeIcon /></LargeIcon><LargeText>Arrange<Inline><Chevron /></Inline></LargeText></LargeButton>
          <LargeButton $w={60} disabled><LargeIcon><StylesIcon /></LargeIcon><LargeText>Quick<Inline>Styles<Chevron /></Inline></LargeText></LargeButton>
          <SmallStack $ml={2}>
            <SmallButton disabled><FillIcon />Shape Fill<Chevron /></SmallButton>
            <SmallButton disabled><OutlineIcon />Shape Outline<Chevron /></SmallButton>
            <SmallButton disabled><EffectsIcon />Shape Effects<Chevron /></SmallButton>
          </SmallStack>
        </Group>
        <Group w={129} label="Editing" pl={14}>
          <SmallStack>
            <SmallButton><FindIcon />Find</SmallButton>
            <SmallButton><ReplaceIcon />Replace<Inline $ml={11}><Chevron /></Inline></SmallButton>
            <SmallButton><SelectIcon />Select<Chevron /></SmallButton>
          </SmallStack>
        </Group>
        <Group w={76} label="Add-ins">
          <LargeButton $w={74}><LargeIcon><Icon w={16} h={40} c="none"><circle cx="8" cy="19" r="7" fill="#ffc266" /><circle cx="8" cy="19" r="6" fill="#ff9500" /></Icon></LargeIcon><LargeText>Add-ins</LargeText></LargeButton>
        </Group>
        <Collapse aria-label="Collapse ribbon"><Icon w={13} h={8} c="#444" sw={1.4}><path d="M1 7l5.500-5.500L12 7" /></Icon></Collapse>
      </Ribbon>

      <Workspace>
        <ThumbPane>
          <ThumbNumber>1</ThumbNumber>
          <ThumbFrame aria-label="Slide 1"><SlidePage mini /></ThumbFrame>
        </ThumbPane>
        <Stage>
          <Canvas><SlideFrame><SlidePage /></SlideFrame></Canvas>
          <Notes aria-label="Notes" placeholder="Click to add notes" />
        </Stage>
      </Workspace>

      <Status>
        <StatusItem $big>Slide 1 of 1</StatusItem>
        <StatusItem $ml={26} aria-label="Spelling"><Icon w={18} h={15} c="#777"><path d="M9 2.500L7 1H1v11.500h6l2 1.500 2-1.500h6M9 2.500V14M9 2.500L11 1h6v3" /><path d="M11.500 5l4.500 5.500M16 5l-4.500 5.500" stroke="#555" strokeWidth="1.700" /></Icon></StatusItem>
        <StatusItem $ml={20} $big>English (United States)</StatusItem>
        <StatusItem $ml={17} $strong $gap={3}>
          <Icon w={20} h={16} c="#555" sw={1.3}><path d="M6 1.500C0 4 0 12 5 14.500M9 1v6M6 5l3 2.500L12 5M9 7l-3 6M13 6h5M15.500 3.500v5" /><path d="M11 9l7 7M18 9l-7 7" strokeWidth="2" /></Icon>
          Accessibility: Investigate
        </StatusItem>
        <Spring />
        <StatusItem $big><Icon w={14} h={14} c="#555" sw={1.3}><path d="M0 7h13M0 10h13M0 13h8" /><path d="M3 4l3.500-4L10 4z" fill="#555" stroke="none" /></Icon>Notes</StatusItem>
        <StatusItem $ml={25} $gap={3}><Icon w={18} h={16} c="none"><path d="M1 0h16q1 0 1 1v10q0 1-1 1H8l-4 4v-4H1q-1 0-1-1V1q0-1 1-1z" fill="#606060" /></Icon>Comments</StatusItem>
        <StatusItem $ml={24} $w={50} $on aria-label="Normal view"><Icon w={17} h={16} c="#666" sw={1.3}><path d="M1 1h15v14.500H1zM4.500 1v14.500M4.500 10.500H16M7.500 3.500h5.500v4.500H7.500z" /></Icon></StatusItem>
        <StatusItem $w={50} aria-label="Slide sorter"><Icon w={17} h={15} c="#777" sw={1.2}><path d="M1 1h5.500v4.500H1zM10 1h5.500v4.500H10zM1 9.500h5.500V14H1zM10 9.500h5.500V14H10z" /></Icon></StatusItem>
        <StatusItem $w={50} aria-label="Reading view"><Icon w={18} h={15} c="#777"><path d="M9 2L7 1H1v12h6l2 1.500 2-1.500h6V1h-6zM9 2v12.500M3 4h4M3 6.500h4M3 9h4M11 4h4M11 6.500h4M11 9h4" /></Icon></StatusItem>
        <StatusItem $w={50} aria-label="Slide show"><Icon w={17} h={15} c="#666" sw={1.3}><path d="M0 1h17" strokeWidth="2" /><path d="M2.500 1v8h12V1M5 4.500h7M8.500 9v5.500M6 14.500h5" /></Icon></StatusItem>
        <StatusItem $ml={7} aria-label="Zoom out"><Icon w={10} h={10} c="#333"><path d="M0 5.500h9" /></Icon></StatusItem>
        <ZoomSlider type="range" aria-label="Zoom" min={10} max={190} defaultValue={81} />
        <StatusItem aria-label="Zoom in"><Icon w={10} h={10} c="#333"><path d="M0 5.500h9M4.500 1v9" /></Icon></StatusItem>
        <StatusItem $ml={16}>81%</StatusItem>
        <StatusItem $ml={18} aria-label="Fit slide"><Icon w={14} h={14} c="#666" sw={1.2}><path d="M.6.6h12.800v12.800H.6zM7 2.500v3M7 8.500v3M2.500 7h3M8.500 7h3M5.500 4L7 2.500 8.500 4M5.500 10L7 11.500 8.500 10M4 5.500L2.500 7 4 8.500M10 5.500L11.500 7 10 8.500" /></Icon></StatusItem>
      </Status>
    </Shell>
  );
}
